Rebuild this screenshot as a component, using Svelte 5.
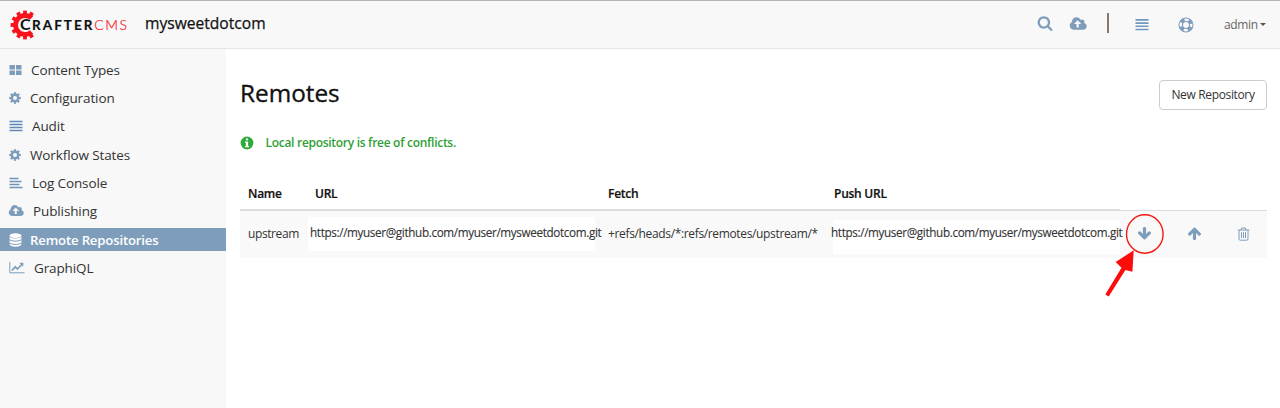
<script>
  const nav = [
    { label: 'Content Types', icon: 'grid', w: 22 },
    { label: 'Configuration', icon: 'gear', w: 21 },
    { label: 'Audit', icon: 'lines', w: 23 },
    { label: 'Workflow States', icon: 'gear', w: 21 },
    { label: 'Log Console', icon: 'log', w: 23 },
    { label: 'Publishing', icon: 'cloud', w: 24 },
    { label: 'Remote Repositories', icon: 'db', w: 21, active: true },
    { label: 'GraphiQL', icon: 'chart', w: 25 }
  ];
  const cloud = 'M1216 864q0-14-9-23l-352-352q-9-9-23-9t-23 9l-351 351q-10 12-10 24 0 14 9 23t23 9h224v352q0 13 9.500 22.500t22.500 9.500h192q13 0 22.500-9.500t9.500-22.500v-352h224q13 0 22.500-9.500t9.500-22.500zm640 288q0 159-112.500 271.500t-271.500 112.500h-1088q-185 0-316.500-131.500t-131.500-316.500q0-130 70-240t188-165q-2-30-2-43 0-212 150-362t362-150q156 0 285.500 87t188.500 231q71-62 166-62 106 0 181 75t75 181q0 76-41 138 130 31 213.500 135.500t83.500 238.500z';
  const arrow = 'M1675 832q0 53-37 90l-651 652q-39 37-91 37-53 0-90-37l-651-652q-38-36-38-90 0-53 38-91l74-75q39-37 91-37 53 0 90 37l294 294v-704q0-52 38-90t90-38h128q52 0 90 38t38 90v704l294-294q37-37 90-37 52 0 91 37l75 75q37 39 37 91z';
  const url = 'https://myuser@github.com/myuser/mysweetdotcom.git';
</script>

<div class="page">
  <header>
    <div class="logo">
      <svg width="32" height="32" viewBox="-16 -16 32 32">
        <path d="M6.500 -7A9.500 9.500 0 1 0 6.500 7" fill="none" stroke="#f8121b" stroke-width="4.800" />
        {#each [150, 180, 210, 240, 270, 300, 330, 360, 390] as a}
          <rect x="-1.900" y="-14.400" width="3.800" height="4" fill="#f8121b" transform="rotate({a})" />
        {/each}
      </svg>
      <span class="word"><span class="big">C</span><span class="rafter">RAFTER</span><span class="cms">CMS</span></span>
    </div>
    <span class="site">mysweetdotcom</span>
    <div class="tools">
      <svg class="search" width="16" height="16" viewBox="0 0 1792 1792"><path d="M1216 832q0-185-131.500-316.500t-316.500-131.500-316.500 131.500-131.500 316.500 131.500 316.500 316.500 131.500 316.500-131.500 131.500-316.500zm512 832q0 52-38 90t-90 38q-54 0-90-38l-343-342q-179 124-399 124-143 0-273.500-55.500t-225-150-150-225-55.500-273.500 55.500-273.500 150-225 225-150 273.500-55.500 273.500 55.500 225 150 150 225 55.500 273.500q0 220-124 399l343 343q37 37 37 90z" /></svg>
      <svg class="upload" width="17" height="16" viewBox="-32 0 1920 1792"><path d={cloud} /></svg>
      <i class="bar"></i>
      <svg class="menu" width="14" height="14" viewBox="0 0 14 14"><path d="M.5 2.900h13M.5 6.100h13M.5 9.300h13M.5 12.500h13" fill="none" stroke="#7097bf" stroke-width="1.600" /></svg>
      <svg class="ring" width="16" height="16" viewBox="0 0 16 16" fill="none">
        <circle cx="8" cy="8" r="7" stroke="#7e9dbb" stroke-width="1.100" />
        <circle cx="8" cy="8" r="3.500" stroke="#7e9dbb" stroke-width="1.100" />
        <circle cx="8" cy="8" r="5.200" stroke="#7e9dbb" stroke-width="3.400" stroke-dasharray="4.084 4.084" stroke-dashoffset="-2.042" />
      </svg>
      <span class="admin">admin</span><i class="caret"></i>
    </div>
  </header>
  <div class="body">
    <nav>
      {#each nav as n}
        <div class="item" class:active={n.active}>
          <span class="ico" style="width:{n.w}px">
            {#if n.icon === 'grid'}
              <svg width="13" height="12" viewBox="0 0 13 12"><path d="M.5 1h5.500v4.500H.5zM7 1h5.500v4.500H7zM.5 6.500H6V11H.5zM7 6.500h5.500V11H7z" /></svg>
            {:else if n.icon === 'gear'}
              <svg width="12" height="12" viewBox="-6 -6 12 12">
                <circle r="3.200" fill="none" stroke="#7e9dbb" stroke-width="2.400" />
                {#each [0, 45, 90, 135, 180, 225, 270, 315] as a}<rect x="-1.100" y="-5.800" width="2.200" height="2.200" transform="rotate({a})" />{/each}
              </svg>
            {:else if n.icon === 'lines'}
              <svg width="14" height="12" viewBox="0 0 14 12"><path d="M.5 1.500h13M.5 4.500h13M.5 7.500h13M.5 10.500h13" fill="none" stroke="#5f8ab5" stroke-width="1.400" /></svg>
            {:else if n.icon === 'log'}
              <svg width="14" height="12" viewBox="0 0 14 12"><path d="M.5 1.500h9M.5 4.500h12M.5 7.500h10M.5 10.500h13" fill="none" stroke="#6f93b5" stroke-width="1.400" /></svg>
            {:else if n.icon === 'cloud'}
              <svg width="15" height="14" viewBox="-32 0 1920 1792"><path d={cloud} /></svg>
            {:else if n.icon === 'db'}
              <svg width="13" height="14" viewBox="0 0 13 14" fill="#fff"><ellipse cx="6.500" cy="2.600" rx="6" ry="2.300" /><path d="M.5 4.100c2 1.900 10 1.900 12 0v2c-2 2.300-10 2.300-12 0zM.5 7.300c2 1.900 10 1.900 12 0v2c-2 2.300-10 2.300-12 0zM.5 10.500c2 1.900 10 1.900 12 0v1c-2 3-10 3-12 0z" /></svg>
            {:else}
              <svg width="16" height="13" viewBox="0 0 16 13" fill="none" stroke="#7e9dbb"><path d="M.8 1v10.800H15.500" /><path d="M2.800 9.500l3.500-3.700 2.200 2.200 4.300-4.500" stroke-width="1.700" /><path d="M10.300 1.800h4v4z" fill="#7e9dbb" stroke="none" /></svg>
            {/if}
          </span><span>{n.label}</span>
        </div>
      {/each}
    </nav>
    <main>
      <div class="top"><h1>Remotes</h1><button>New Repository</button></div>
      <div class="notice">
        <svg width="14" height="14" viewBox="0 0 14 14"><circle cx="7" cy="7" r="6.400" fill="#2faa3b" /><path d="M5.900 2.500h2.200v1.800H5.900zM5 5.400h3.100v4.500H9v1.400H5V9.900h.9V6.800H5z" fill="#fff" /></svg>
        <span>Local repository is free of conflicts.</span>
      </div>
      <div class="grid heads"><b>Name</b><b>URL</b><b>Fetch</b><b>Push URL</b></div>
      <div class="grid row">
        <span class="name">upstream</span>
        <span class="mask m1">{url}</span>
        <span class="fetch">+refs/heads/*:refs/remotes/upstream/*</span>
        <span class="mask m2"><span>{url}</span></span>
        <span class="actions">
          <svg width="15" height="15" viewBox="0 0 1792 1792"><path d={arrow} /></svg>
          <svg width="15" height="15" viewBox="0 0 1792 1792"><path d={arrow} transform="rotate(180 896 896)" /></svg>
          <svg width="13" height="14" viewBox="0 0 13 14" fill="none" stroke="#7e9dbb"><path d="M.8 3h11.400M4 3l.7-2h3.600L9 3M2 3v9q0 1.200 1.200 1.200h6.600q1.200 0 1.200-1.200V3M4.500 5.200v5.800M6.500 5.200v5.800M8.500 5.200v5.800" /></svg>
        </span>
        <svg class="callout" width="80" height="100" viewBox="1090 205 80 100"><ellipse cx="1144.800" cy="234" rx="18.300" ry="19.200" fill="none" stroke="#f21b14" stroke-width="1.400" /><path d="M1105.300 294.500l16.200-26.800-5.800-5.700 18-11.700-1.300 21.500-7-1.900-16.700 26.600z" fill="#fc0d0b" /></svg>
      </div>
    </main>
  </div>
</div>

<style>
  :global(body) { background: #fff; }
  .page { width: 1280px; height: 408px; overflow: hidden; display: flex; flex-direction: column; font-family: "Open Sans", sans-serif; color: #333; background: #fff; }
  .page * { box-sizing: border-box; }
  svg { display: block; flex: none; fill: #7e9dbb; overflow: visible; }
  svg[fill='none'] { fill: none; }
  svg[fill='#fff'] { fill: #fff; }
  header { height: 49px; flex: none; border-top: 1px solid #b5b5b5; border-bottom: 1px solid #e5e5e5; background: #f8f8f8; display: flex; align-items: flex-start; }
  .logo { display: flex; width: 145px; padding: 7.500px 0 0 9px; }
  .word { display: flex; align-items: baseline; margin-left: -21px; padding-top: 5px; font: 700 13.500px/20px Lato, sans-serif; color: #111; white-space: nowrap; }
  .big { font-size: 16px; }
  .rafter { letter-spacing: 2px; margin-left: 1.500px; -webkit-text-stroke: .2px #111; }
  .cms { font-weight: 300; letter-spacing: 1.500px; color: #f8121b; font-size: 14px; -webkit-text-stroke: .2px #f8121b; }
  .site { font-size: 15.600px; line-height: 22px; margin-top: 11px; color: #111; white-space: nowrap; -webkit-text-stroke: .25px #111; }
  .tools { margin-left: auto; width: 243px; display: flex; align-items: flex-start; }
  .search { margin-top: 14px; }
  .upload { margin: 15px 0 0 17px; }
  .bar { width: 2px; height: 20px; margin: 12px 0 0 20px; background: #8c7768; }
  .menu { margin: 16px 0 0 25.500px; }
  .ring { margin: 16px 0 0 29.500px; }
  .admin { font-size: 12px; letter-spacing: -.35px; line-height: 20px; margin: 14px 0 0 30px; color: #666; }
  .caret { border: 3.500px solid transparent; border-top-color: #555; border-bottom: 0; margin: 22px 0 0 2px; }
  .body { flex: 1; display: flex; min-height: 0; }
  nav { width: 226px; flex: none; background: #f8f8f8; padding-top: 9px; }
  .item { height: 23px; margin-bottom: 5.350px; display: flex; align-items: center; padding-left: 9px; font-size: 13.500px; letter-spacing: -.12px; white-space: nowrap; }
  .item.active { background: #7e9dbb; color: #fff; font-weight: 600; font-size: 13.200px; letter-spacing: -.18px; }
  .ico { flex: none; }
  main { flex: 1; padding: 0 13px 0 14px; min-width: 0; }
  .top { display: flex; justify-content: space-between; height: 86px; }
  h1 { font-size: 24.300px; font-weight: 400; line-height: 32px; margin: 28px 0 0; color: #111; -webkit-text-stroke: .35px #111; }
  button { width: 108px; height: 30px; margin-top: 31px; padding: 0 0 2px; border: 1px solid #ccc; border-radius: 4px; background: #fff; font: 12px "Open Sans", sans-serif; letter-spacing: -.35px; color: #333; }
  .notice { display: flex; align-items: center; gap: 11.500px; height: 15px; font-size: 12px; letter-spacing: -.29px; font-weight: 600; color: #2f9f37; }
  .grid { display: grid; grid-template-columns: 67px 293px 226px 293px 1fr; white-space: nowrap; padding-left: 8px; }
  .heads { margin-top: 34px; height: 27px; font-size: 12px; letter-spacing: -.25px; line-height: 19px; color: #111; background: linear-gradient(#ddd, #ddd) left bottom / 880px 2px no-repeat, linear-gradient(#ddd, #ddd) left bottom / 100% 1px no-repeat; }
  .heads b { font-weight: 600; -webkit-text-stroke: .2px #111; }
  .row { position: relative; height: 47px; background: #f9f9f9; font-size: 12px; align-items: center; }
  .name, .fetch { line-height: 20px; padding-bottom: 1px; letter-spacing: -.41px; }
  .fetch { letter-spacing: -.35px; }
  .mask { display: block; background: #fff; height: 34px; width: 287px; font-size: 11.700px; letter-spacing: -.35px; -webkit-text-stroke: .12px #333; }
  .m1 { line-height: 31px; margin: -2px 0 0 -7px; padding-left: 2px; }
  .m2 { line-height: 24px; margin: 5px 0 0 -1px; }
  .m2 span { margin-left: -2px; }
  .actions { display: flex; align-items: center; gap: 35px; padding: 0 0 2px 10px; }
  .callout { position: absolute; left: 850px; top: -6px; }
</style>
